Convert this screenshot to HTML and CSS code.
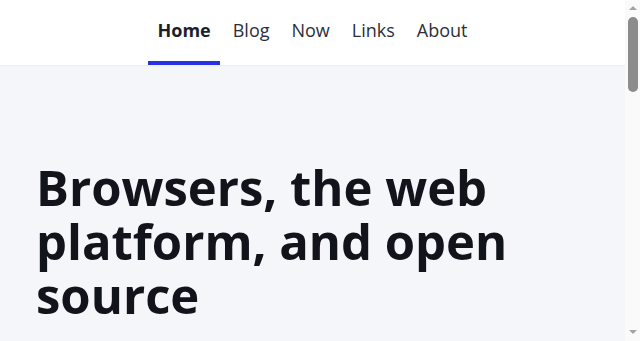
FILE: index.html
```html
<!DOCTYPE html>
<html lang="en">
  <head>
    <meta charset="UTF-8" />
    <meta name="viewport" content="width=device-width, initial-scale=1.0" />
    <title>Browsers, the web platform, and open source</title>
    <link rel="stylesheet" href="styles.css">
  </head>
  <body>
    <header class="topo">
      <nav class="menu">
        <a href="#" class="menu-link ativo">Home</a>
        <a href="#" class="menu-link">Blog</a>
        <a href="#" class="menu-link">Now</a>
        <a href="#" class="menu-link">Links</a>
        <a href="#" class="menu-link">About</a>
      </nav>
    </header>

    <main class="conteudo">
      <section class="destaque">
        <h1>Browsers, the web platform, and open source</h1>
      </section>
      <section class="corpo"></section>
    </main>

    <div class="rolagem" aria-hidden="true">
      <span class="seta seta-cima"></span>
      <span class="polegar"></span>
      <span class="seta seta-baixo"></span>
    </div>
  </body>
</html>
```

FILE: styles.css
```css
body {
  margin: 0;
  padding-right: 15px;
  background-color: #f5f6f9;
  font-family: "Open Sans", sans-serif;
  color: #11141b;
}

.topo {
  background-color: #ffffff;
  height: 65px;
  box-shadow: 0 1px 2px rgba(0, 0, 0, 0.04);
}

.menu {
  display: flex;
  justify-content: center;
  gap: 4px;
  height: 100%;
}

.menu-link {
  display: flex;
  align-items: center;
  padding: 0 9px 2px;
  border-bottom: 4px solid transparent;
  box-sizing: border-box;
  font-size: 18px;
  color: #2a2f3a;
  text-decoration: none;
}

.menu-link.ativo {
  font-weight: 700;
  color: #1c1f27;
  border-bottom-color: #2633e0;
}

.destaque {
  padding: 95px 36px 40px;
}

.destaque h1 {
  margin: 0;
  font-size: 49px;
  line-height: 54px;
  font-weight: 700;
}

.corpo {
  min-height: 1000px;
}

/* barra de rolagem desenhada */
.rolagem {
  position: fixed;
  top: 0;
  right: 0;
  width: 15px;
  height: 100vh;
  background-color: #fafafa;
  display: flex;
  flex-direction: column;
  align-items: center;
}

.seta {
  width: 0;
  height: 0;
  border-left: 4px solid transparent;
  border-right: 4px solid transparent;
}

.seta-cima {
  margin-top: 6px;
  border-bottom: 4px solid #a3a3a3;
}

.seta-baixo {
  margin-top: auto;
  margin-bottom: 7px;
  border-top: 4px solid #a3a3a3;
}

.polegar {
  margin-top: 7px;
  width: 10px;
  height: 75px;
  border-radius: 5px;
  background-color: #8c8c8c;
}
```
